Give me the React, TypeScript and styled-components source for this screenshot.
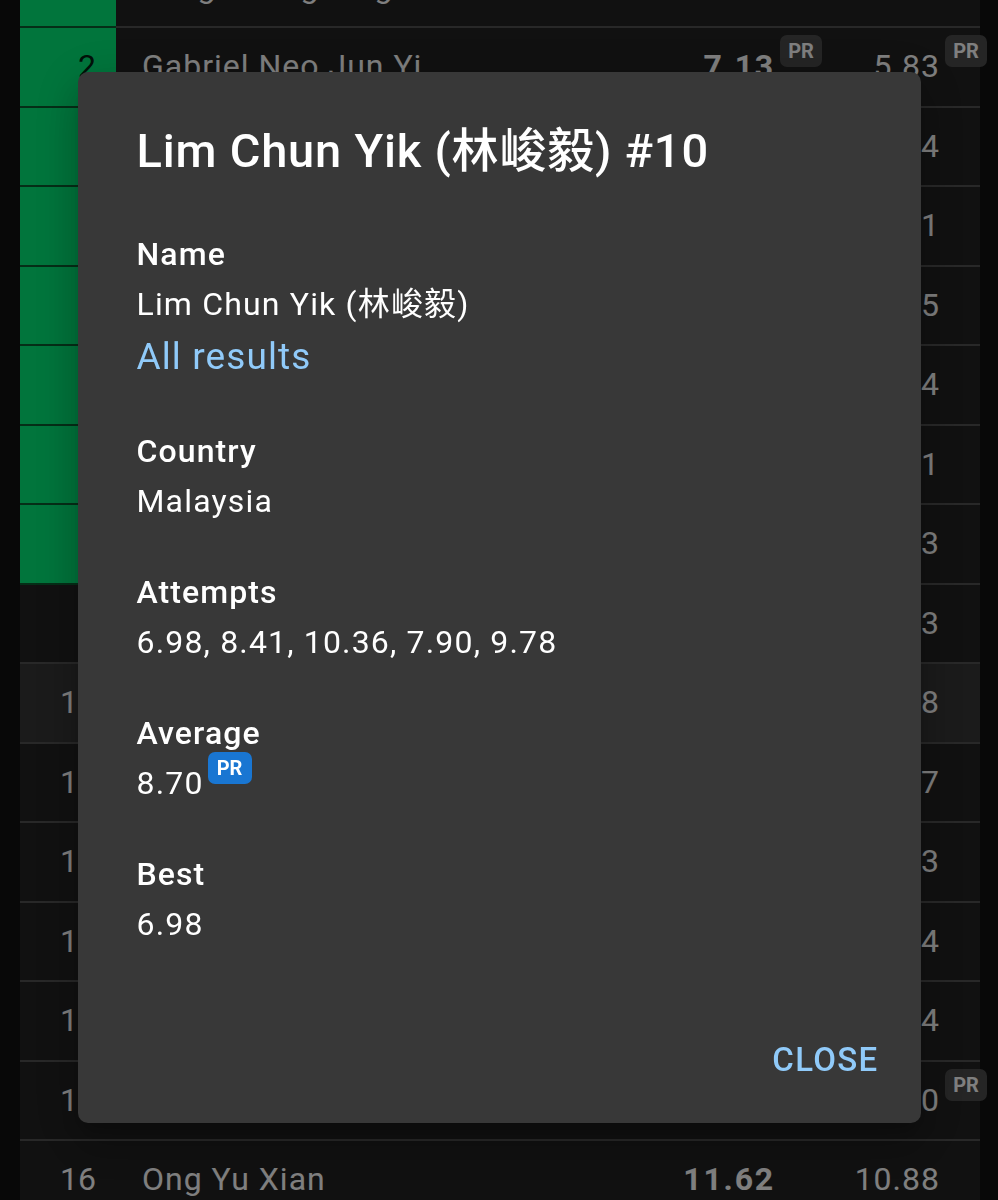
import React from "react";
import styled, { createGlobalStyle } from "styled-components";

const GlobalStyle = createGlobalStyle`
  html, body {
    margin: 0;
    padding: 0;
    background: #101010;
  }
  body {
    font-family: Roboto, "Noto Sans CJK SC", sans-serif;
    overflow: hidden;
  }
`;

const Page = styled.div`
  height: 1200px;
  overflow: hidden;
  background: #101010;
  padding: 0 18px 0 20px;
`;

const Table = styled.div`
  margin-top: -51.5px;
  background: #222222;
`;

const Row = styled.div<{ $highlight?: boolean }>`
  display: grid;
  grid-template-columns: 96px 1fr 140px 205px;
  height: 79.5px;
  background: ${(p) => (p.$highlight ? "#363636" : "#222222")};
  color: #ffffff;
  font-size: 32px;
  line-height: 77.5px;
  letter-spacing: 1px;
`;

const Cell = styled.div`
  box-sizing: border-box;
  border-bottom: 2px solid #515151;
  white-space: nowrap;
`;

const RankCell = styled(Cell)<{ $top?: boolean }>`
  text-align: right;
  padding-right: 20px;
  letter-spacing: 0;
  background: ${(p) => (p.$top ? "#02ea78" : "transparent")};
  color: ${(p) => (p.$top ? "rgba(0,0,0,0.87)" : "#ffffff")};
  border-bottom-color: ${(p) => (p.$top ? "#0a5c2e" : "#515151")};
`;

const NameCell = styled(Cell)`
  padding-left: 26px;
  overflow: hidden;
`;

const TimeCell = styled(Cell)<{ $bold?: boolean; $padRight?: number }>`
  text-align: right;
  padding-right: ${(p) => p.$padRight ?? 0}px;
  font-weight: ${(p) => (p.$bold ? 700 : 400)};
  letter-spacing: ${(p) => (p.$bold ? "1.8px" : "1px")};
`;

const TimeValue = styled.span`
  position: relative;
  display: inline-block;
`;

const TableBadge = styled.span`
  position: absolute;
  left: calc(100% + 5px);
  top: 7px;
  width: 42px;
  height: 32px;
  border-radius: 7px;
  background: #4a4a4a;
  color: #ffffff;
  font-size: 20px;
  font-weight: 700;
  line-height: 32px;
  letter-spacing: 0;
  text-align: center;
`;

const Backdrop = styled.div`
  position: fixed;
  inset: 0;
  background: rgba(0, 0, 0, 0.5);
  display: flex;
  align-items: center;
  justify-content: center;
`;

const Dialog = styled.div`
  width: 843px;
  margin-bottom: 5px;
  background: #383838;
  border-radius: 10px;
  color: #ffffff;
  box-shadow: 0 11px 15px -7px rgba(0, 0, 0, 0.2), 0 24px 38px 3px rgba(0, 0, 0, 0.14),
    0 9px 46px 8px rgba(0, 0, 0, 0.12);
  display: flex;
  flex-direction: column;
`;

const Title = styled.h2`
  margin: 0;
  padding: 49px 59px 0;
  font-size: 47px;
  line-height: 60px;
  font-weight: 500;
  letter-spacing: 0.8px;
`;

const Body = styled.div`
  padding: 48px 59px 0;
  display: flex;
  flex-direction: column;
  gap: 41px;
`;

const Section = styled.div`
  display: flex;
  flex-direction: column;
`;

const Label = styled.div`
  font-size: 32px;
  line-height: 50px;
  font-weight: 500;
  letter-spacing: 1.1px;
`;

const Value = styled.div`
  display: flex;
  align-items: flex-start;
  font-size: 32px;
  line-height: 50px;
  font-weight: 400;
  letter-spacing: 1.17px;
`;

const Link = styled.a`
  font-size: 37px;
  line-height: 56px;
  color: #90caf9;
  text-decoration: none;
  letter-spacing: 1.1px;
  align-self: flex-start;
`;

const PrBadge = styled.span`
  margin: -6px 0 0 4px;
  width: 44px;
  height: 32px;
  border-radius: 7px;
  background: #1976d2;
  color: #ffffff;
  font-size: 20px;
  font-weight: 700;
  line-height: 32px;
  letter-spacing: 0;
  text-align: center;
`;

const Actions = styled.div`
  display: flex;
  justify-content: flex-end;
  padding: 86px 42px 38px 0;
`;

const CloseButton = styled.button`
  background: none;
  border: 0;
  padding: 0;
  font-family: Roboto, sans-serif;
  font-size: 33px;
  line-height: 50px;
  font-weight: 500;
  letter-spacing: 1.3px;
  color: #90caf9;
  text-transform: uppercase;
  cursor: pointer;
`;

type Entry = {
  rank: number;
  name: string;
  avg: string;
  best: string;
  avgPr?: boolean;
  bestPr?: boolean;
  highlight?: boolean;
};

const rows: Entry[] = [
  { rank: 1, name: "Tang Sheng Jing", avg: "6.12", best: "5.47" },
  { rank: 2, name: "Gabriel Neo Jun Yi", avg: "7.13", best: "5.83", avgPr: true, bestPr: true },
  { rank: 3, name: "Ryan Lim Wei Hao", avg: "7.28", best: "6.24" },
  { rank: 4, name: "Tan Zhi Xuan", avg: "7.51", best: "7.01" },
  { rank: 5, name: "Chua Kai Jie", avg: "7.66", best: "6.95" },
  { rank: 6, name: "Lee Yi Heng", avg: "7.82", best: "7.44" },
  { rank: 7, name: "Koh Jun Hao", avg: "8.03", best: "7.21" },
  { rank: 8, name: "Ethan Goh", avg: "8.29", best: "6.83" },
  { rank: 9, name: "Chen Wei Lun", avg: "8.55", best: "7.63" },
  { rank: 10, name: "Lim Chun Yik (林峻毅)", avg: "8.70", best: "6.98", avgPr: true, highlight: true },
  { rank: 11, name: "Aaron Teo", avg: "9.02", best: "7.57" },
  { rank: 12, name: "Ho Jia Le", avg: "9.37", best: "8.03" },
  { rank: 13, name: "Sean Ng Kai Wen", avg: "9.81", best: "7.94" },
  { rank: 14, name: "Marcus Loh", avg: "10.26", best: "8.14" },
  { rank: 15, name: "Isaac Wong", avg: "10.94", best: "7.60", bestPr: true },
  { rank: 16, name: "Ong Yu Xian", avg: "11.62", best: "10.88" },
];

export default function App() {
  return (
    <>
      <GlobalStyle />
      <Page>
        <Table>
          {rows.map((r) => (
            <Row key={r.rank} $highlight={r.highlight}>
              <RankCell $top={r.rank <= 8}>{r.rank}</RankCell>
              <NameCell>{r.name}</NameCell>
              <TimeCell $bold>
                <TimeValue>
                  {r.avg}
                  {r.avgPr && <TableBadge>PR</TableBadge>}
                </TimeValue>
              </TimeCell>
              <TimeCell $padRight={40}>
                <TimeValue>
                  {r.best}
                  {r.bestPr && <TableBadge>PR</TableBadge>}
                </TimeValue>
              </TimeCell>
            </Row>
          ))}
        </Table>
      </Page>
      <Backdrop>
        <Dialog role="dialog">
          <Title>Lim Chun Yik (林峻毅) #10</Title>
          <Body>
            <Section>
              <Label>Name</Label>
              <Value>Lim Chun Yik (林峻毅)</Value>
              <Link href="#">All results</Link>
            </Section>
            <Section>
              <Label>Country</Label>
              <Value>Malaysia</Value>
            </Section>
            <Section>
              <Label>Attempts</Label>
              <Value>6.98, 8.41, 10.36, 7.90, 9.78</Value>
            </Section>
            <Section>
              <Label>Average</Label>
              <Value>
                8.70
                <PrBadge>PR</PrBadge>
              </Value>
            </Section>
            <Section>
              <Label>Best</Label>
              <Value>6.98</Value>
            </Section>
          </Body>
          <Actions>
            <CloseButton>Close</CloseButton>
          </Actions>
        </Dialog>
      </Backdrop>
    </>
  );
}
